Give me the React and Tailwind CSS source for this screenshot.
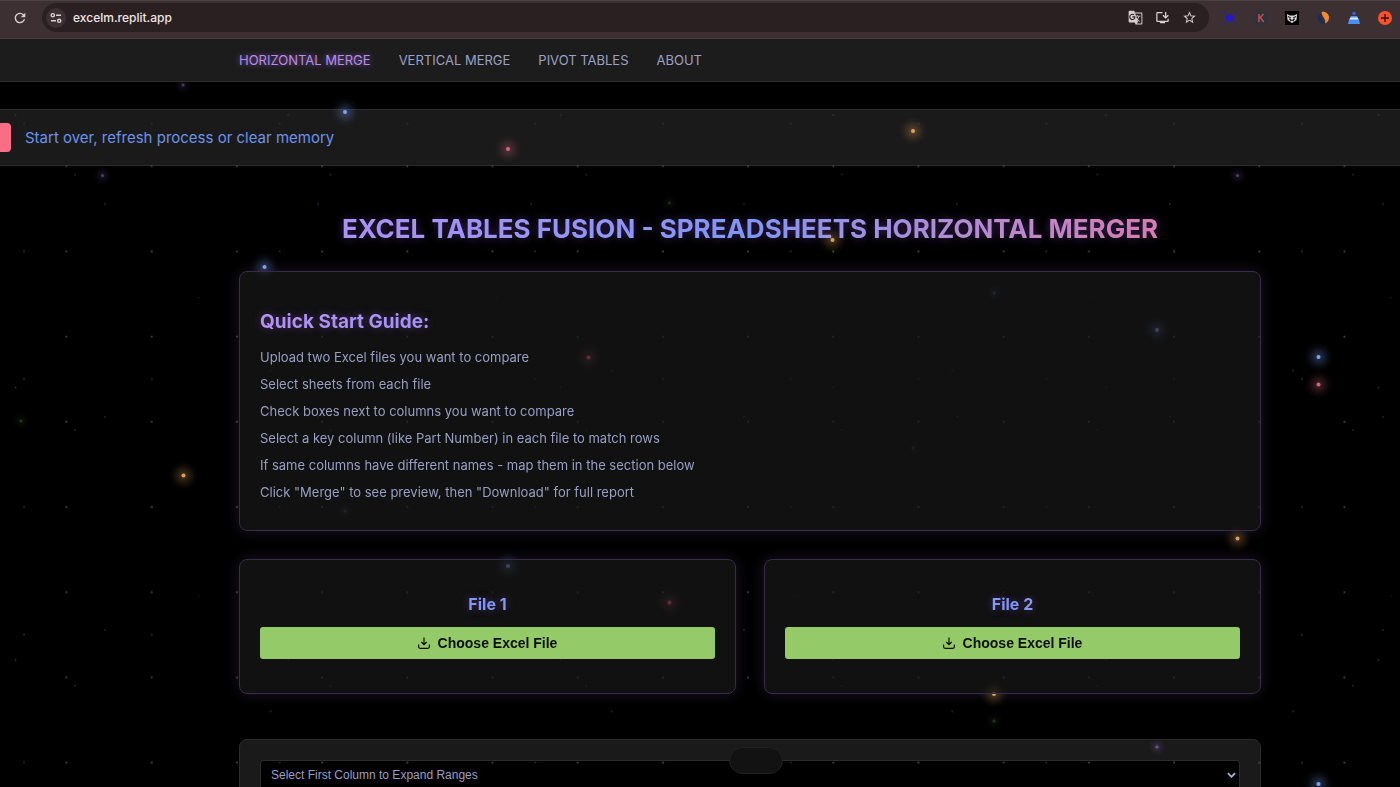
import React from 'react';
import { MdGTranslate, MdInstallDesktop, MdRefresh, MdStarBorder } from 'react-icons/md';

const NAV = ['HORIZONTAL MERGE', 'VERTICAL MERGE', 'PIVOT TABLES', 'ABOUT'];

const STEPS = [
  'Upload two Excel files you want to compare',
  'Select sheets from each file',
  'Check boxes next to columns you want to compare',
  'Select a key column (like Part Number) in each file to match rows',
  'If same columns have different names - map them in the section below',
  'Click "Merge" to see preview, then "Download" for full report',
];

// repeating layers of tiny stars: tile size, offset inside the tile, colour
const DUST = [
  { id: 'd100', size: 85.2, x: 66.5, y: 81, fill: '#505050' },
  { id: 'd150', size: 127.8, x: 24, y: 123.5, fill: '#303030' },
  { id: 'd250', size: 213, x: 105, y: 204, fill: '#20203c' },
  { id: 'd300', size: 255.6, x: 75, y: 174.5, fill: '#262630' },
  { id: 'd320', size: 272.6, x: 15.5, y: 115, fill: '#303030' },
  { id: 'd350', size: 298.2, x: 198.5, y: 298, fill: '#3c1420' },
  { id: 'd400', size: 340.8, x: 270.7, y: 370.5, fill: '#2c2c24' },
];

const BLUE = '#7aa2f7';
const RED = '#f7768e';
const ORANGE = '#f2b266';
const PURPLE = '#9d7cd8';
const GREEN = '#9ece6a';

const STARS = [
  [183, 85, PURPLE, 0.45], [345, 112, BLUE, 1], [508, 149, RED, 0.85], [913, 131, ORANGE, 0.9],
  [102.5, 175.5, PURPLE, 0.5], [1237.5, 175.5, PURPLE, 0.5], [669.5, 203, GREEN, 0.2], [832.5, 240, ORANGE, 0.9],
  [264.5, 267, BLUE, 1], [994, 293, BLUE, 0.4], [1157, 330, BLUE, 0.9], [588.5, 357.5, RED, 0.8],
  [1318.5, 357, BLUE, 1], [1318.5, 384.5, RED, 0.85], [21, 421, GREEN, 0.25], [183.5, 475.5, ORANGE, 0.9],
  [913, 448, GREEN, 0.2], [345, 511, PURPLE, 0.4], [1237.5, 538.5, ORANGE, 0.9], [508, 566, BLUE, 0.9],
  [669.5, 602.5, RED, 0.8], [994, 694, ORANGE, 0.9], [994, 721, GREEN, 0.25], [1157, 747, PURPLE, 0.65],
  [1318.5, 784, BLUE, 1],
];

function Starfield() {
  return (
    <svg className="pointer-events-none fixed inset-0 z-10 h-full w-full" aria-hidden="true">
      <defs>
        {DUST.map((d) => (
          <pattern key={d.id} id={d.id} width={d.size} height={d.size} patternUnits="userSpaceOnUse">
            <circle cx={d.x % d.size} cy={d.y % d.size} r="0.9" fill={d.fill} />
          </pattern>
        ))}
        {[BLUE, RED, ORANGE, PURPLE, GREEN].map((c) => (
          <radialGradient key={c} id={`glow${c.slice(1)}`}>
            <stop offset="0" stopColor={c} stopOpacity="0.34" />
            <stop offset="0.35" stopColor={c} stopOpacity="0.18" />
            <stop offset="0.7" stopColor={c} stopOpacity="0.05" />
            <stop offset="1" stopColor={c} stopOpacity="0" />
          </radialGradient>
        ))}
      </defs>
      {DUST.map((d) => (
        <rect key={d.id} y="84" width="100%" height="100%" fill={`url(#${d.id})`} />
      ))}
      {STARS.map(([x, y, c, o]) => (
        <g key={`${x}-${y}`} opacity={o}>
          <circle cx={x} cy={y} r={o > 0.7 ? 15 : 10} fill={`url(#glow${c.slice(1)})`} />
          <circle cx={x} cy={y} r={o > 0.7 ? 2 : 1.5} fill={c} />
        </g>
      ))}
    </svg>
  );
}

function TuneIcon() {
  return (
    <svg viewBox="0 0 12 12" className="h-3 w-3" fill="none" stroke="#d9cfd1" strokeWidth="1.4">
      <circle cx="2.8" cy="3.2" r="1.6" />
      <path d="M6 3.2h5M1 8.8h5" />
      <circle cx="9.2" cy="8.8" r="1.6" />
    </svg>
  );
}

function Extensions() {
  return (
    <div className="flex items-center gap-[17px]">
      <svg viewBox="0 0 14 14" className="h-[14px] w-[14px]">
        <path d="M1 3V1h2M11 1h2v2M13 11v2h-2M3 13H1v-2" fill="none" stroke="#2620a8" strokeWidth="0.8" />
        <path d="M3 4.5h2L6 3h2l1 1.5h2V10H3z" fill="#1d17e0" />
        <circle cx="7" cy="7" r="1.5" fill="#302588" />
      </svg>
      <svg viewBox="0 0 14 14" className="h-[14px] w-[14px]">
        <circle cx="7" cy="7" r="7" fill="#2b333f" />
        <path d="M5 3v8M9.500 3L5.500 7.200M6.500 6.500L9.700 11" stroke="#cf4a48" strokeWidth="1.5" fill="none" />
      </svg>
      <svg viewBox="0 0 14 14" className="h-[14px] w-[14px]">
        <path d="M0 0h14v14H0z" fill="#000" />
        <path d="M2 3l3 1.500h4L12 3l-.5 6L7 12 2.500 9z" fill="#d8d8d8" />
        <path d="M3 5.500l3 1.500M11 5.500L8 7M4 8l2 .6M10 8l-2 .6M5 10l2-1 2 1" stroke="#000" strokeWidth="1" fill="none" />
      </svg>
      <svg viewBox="0 0 14 14" className="h-[14px] w-[14px]">
        <path d="M5 2a5 5 0 1 0 4.500 10C6 10 4.500 6 5 2z" fill="#1d2a5c" />
        <path d="M5.500 1c4-1 7.500 2 7.500 5.500 0 3-1.500 5-4 6 1.500-5-2.500-5-3.500-11.500z" fill="#f58a2c" />
      </svg>
      <svg viewBox="0 0 14 14" className="h-[14px] w-[14px]">
        <circle cx="7" cy="2.500" r="1.800" fill="#2f62e8" />
        <path d="M4 5.500h6l2 3.500H2z" fill="#dcebff" />
        <path d="M3 6.500q.5-1.500 1.500-1.500h5q1 0 1.500 1.500z" fill="#4d8df6" />
        <path d="M2 8.500h10l1 4.500H1z" fill="#4d8df6" />
      </svg>
      <svg viewBox="0 0 14 14" className="h-[14px] w-[14px]">
        <circle cx="7" cy="7" r="7" fill="#ff4f2b" />
        <path d="M7 3v8M3 7h8" stroke="#2b1512" strokeWidth="1.4" />
      </svg>
    </div>
  );
}

function BrowserBar() {
  return (
    <div className="relative z-20 flex h-[39px] shrink-0 items-center border-t border-b border-[#4b4143] bg-[#3c3033] pr-2 pb-1 pl-3 text-[#d9cfd1]">
      <button type="button" aria-label="Reload" className="mr-[14px] flex">
        <MdRefresh className="h-4 w-4" />
      </button>
      <div className="mr-[14px] flex h-[29px] flex-1 items-center rounded-full bg-[#2a2022] pr-3 pl-1">
        <button type="button" aria-label="Site information" className="flex h-5 w-5 items-center justify-center rounded-full bg-[#3c3033]">
          <TuneIcon />
        </button>
        <input
          aria-label="Address"
          defaultValue="excelm.replit.app"
          className="ml-[7px] min-w-0 flex-1 bg-transparent text-[12px] font-medium text-[#efe6e8] outline-none"
        />
        <div className="flex items-center gap-3">
          <button type="button" aria-label="Translate"><MdGTranslate className="h-[15px] w-[15px]" /></button>
          <button type="button" aria-label="Install"><MdInstallDesktop className="h-[15px] w-[15px]" /></button>
          <button type="button" aria-label="Bookmark"><MdStarBorder className="h-[15px] w-[15px]" /></button>
        </div>
      </div>
      <Extensions />
    </div>
  );
}

const gradientText =
  'bg-linear-to-r from-[#bb9af7] via-[#7aa2f7] to-[#f7768e] bg-clip-text font-bold text-transparent [text-shadow:0_0_9px_rgba(157,100,240,0.4)]';

const cardClass =
  'relative z-20 rounded-lg border border-[#382c4a] bg-[#1a1a1a]/65 px-5 shadow-[0_0_14px_rgba(157,124,216,0.18)]';

function FileCard({ title }) {
  return (
    <section className={`${cardClass} pt-8 pb-[34px]`}>
      <h3 className={`${gradientText} text-center text-base leading-6`}>{title}</h3>
      <button
        type="button"
        className="mt-[11px] flex h-8 w-full items-center justify-center gap-2 rounded-[3px] bg-[#94ca68] font-['Liberation_Sans',sans-serif] text-sm font-bold text-[#0c0f09]"
      >
        <svg viewBox="0 0 12 12" className="h-3 w-3" fill="none" stroke="currentColor" strokeWidth="1.2">
          <path d="M6 0.500v7M3.300 5L6 7.700 8.700 5M.6 7.500v2.300q0 1.500 1.500 1.500h7.800q1.500 0 1.500-1.500V7.500" />
        </svg>
        Choose Excel File
      </button>
    </section>
  );
}

export default function App() {
  return (
    <div className="flex h-screen flex-col overflow-hidden bg-black font-[Inter,sans-serif] text-[#a9b1d6]">
      <BrowserBar />
      <nav className="relative z-20 shrink-0 border-b border-[#2c2c2c] bg-[#1c1c1c] pl-[100px]">
        <div className="mx-auto flex max-w-[1022px] gap-7 py-[9px] text-[13px] leading-6">
          {NAV.map((item, i) => (
            <a
              key={item}
              href="#"
              className={i === 0 ? 'text-[#b98bf0] [text-shadow:0_0_6px_rgba(187,130,247,0.6)]' : 'text-[#9aa1c4]'}
            >
              {item}
            </a>
          ))}
        </div>
      </nav>

      <div className="mt-[27px] flex shrink-0 items-center gap-[14px] border-y border-[#2c2c2c] bg-[#1a1a1a] py-[13px]">
        <button type="button" aria-label="Refresh" className="-ml-1 h-[29px] w-[15px] rounded bg-[#fa6d87]" />
        <p className="text-[15px] leading-6 text-[#6c93ea]">Start over, refresh process or clear memory</p>
      </div>

      <main className="shrink-0 pl-[100px]">
        <div className="mx-auto max-w-[1022px]">
          <h1 className={`${gradientText} mt-11 text-center text-[26px] leading-[38px]`}>
            EXCEL TABLES FUSION - SPREADSHEETS HORIZONTAL MERGER
          </h1>

          <section className={`${cardClass} mt-[23px] pt-9 pb-6`}>
            <h2 className={`${gradientText} text-[19px] leading-7`}>Quick Start Guide:</h2>
            <ul className="mt-2 text-[13px] leading-[27px] text-[#989fc2]">
              {STEPS.map((s) => (
                <li key={s}>{s}</li>
              ))}
            </ul>
          </section>

          <div className="mt-7 grid grid-cols-2 gap-7">
            <FileCard title="File 1" />
            <FileCard title="File 2" />
          </div>

          <section className="mt-[45px] rounded-lg border border-[#2c2c2c] bg-[#1a1a1a] px-5 pt-5 pb-10">
            <div className="relative">
              <select
                aria-label="First column"
                className="h-[30px] w-full appearance-none rounded-[3px] border border-[#2c2c2c] bg-black px-[10px] font-['Liberation_Sans',sans-serif] text-xs text-[#989fc2]"
              >
                <option>Select First Column to Expand Ranges</option>
              </select>
              <svg viewBox="0 0 10 6" className="pointer-events-none absolute top-3 right-1 h-[6px] w-[9px]" fill="none" stroke="#a9b1d6" strokeWidth="2">
                <path d="M1 1l4 4 4-4" />
              </svg>
            </div>
          </section>
        </div>
      </main>

      <Starfield />
      <div className="fixed bottom-[13px] left-[54%] z-30 h-[27px] w-[54px] -translate-x-1/2 rounded-full border border-[#222222] bg-[#121212]" />
    </div>
  );
}
